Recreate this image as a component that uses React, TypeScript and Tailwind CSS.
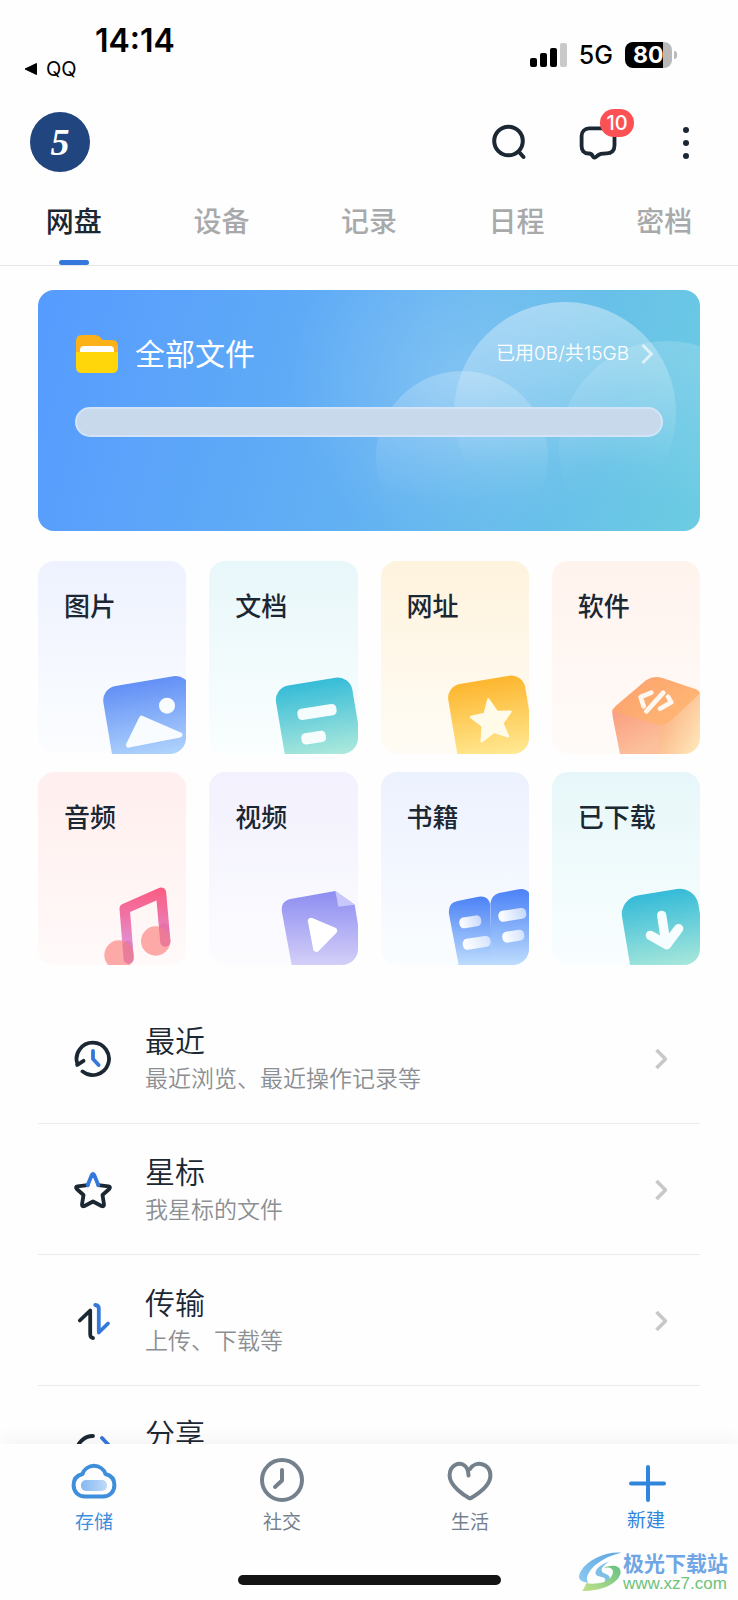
import { useState } from "react";
import type { ReactNode } from "react";

const TABS = ["网盘", "设备", "记录", "日程", "密档"];

const PILL = { height: 34, rx: 13, fill: "#fff" };

function Gradient({
  id,
  from,
  to,
}: {
  id: string;
  from: string;
  to: string;
}) {
  return (
    <linearGradient id={id} x1="0" y1="0" x2="0" y2="1">
      <stop offset="0" stopColor={from} />
      <stop offset="1" stopColor={to} />
    </linearGradient>
  );
}

/* Category artwork, all drawn in a 270 unit box */

const pictureArt = (
  <>
    <Gradient id="g-picture" from="#6390f6" to="#b9dcfd" />
    <rect width="264" height="256" rx="44" fill="url(#g-picture)" transform="translate(15 73) rotate(-9.5)" />
    <circle cx="213" cy="125" r="24" fill="#f8fcff" />
    <path d="M137 163L251 213L98 243Z" fill="#f8fcff" stroke="#f8fcff" strokeWidth="16" strokeLinejoin="round" />
  </>
);

const documentArt = (
  <>
    <Gradient id="g-document" from="#36bcd8" to="#b6ecdc" />
    <rect width="232" height="246" rx="44" fill="url(#g-document)" transform="translate(17 72) rotate(-9.5)" />
    <rect x="-59" y="-17" width="118" {...PILL} transform="translate(147 144) rotate(-9)" fillOpacity=".93" />
    <rect x="-37" y="-17" width="74" {...PILL} transform="translate(137 221) rotate(-9)" fillOpacity=".93" />
  </>
);

const linkArt = (
  <>
    <Gradient id="g-link" from="#fdb62f" to="#ffee9c" />
    <rect width="234" height="256" rx="42" fill="url(#g-link)" transform="translate(21 67) rotate(-9.5)" />
    <path
      d="M148 106L174 144L215 143L190 178L207 217L164 204L128 232L131 186L96 159L137 150Z"
      fill="#fffbe8"
      stroke="#fffbe8"
      strokeWidth="7"
      strokeLinejoin="round"
    />
  </>
);

const softwareArt = (
  <>
    <defs>
      <linearGradient id="g-box-top" x1="0" y1="0" x2="1" y2=".6">
        <stop offset="0" stopColor="#fba06e" />
        <stop offset="1" stopColor="#ffb774" />
      </linearGradient>
      <linearGradient id="g-box-left" x1="0" y1="0" x2=".5" y2="1">
        <stop offset="0" stopColor="#fa9d7e" />
        <stop offset="1" stopColor="#fcc09c" />
      </linearGradient>
      <linearGradient id="g-box-right" x1="0" y1=".2" x2="1" y2="1">
        <stop offset="0" stopColor="#fbab7c" />
        <stop offset="1" stopColor="#ffebbe" />
      </linearGradient>
    </defs>
    <path d="M8 135L150 180V270H30L8 158Q5 144 8 135Z" fill="url(#g-box-left)" />
    <path d="M149 180L262 80Q272 84 272 98V270H149Z" fill="url(#g-box-right)" />
    <path d="M8 141Q10 130 24 120L108 49Q132 32 160 43L258 76Q268 80 270 88L186 167Q160 190 128 178Z" fill="url(#g-box-top)" />
    <g fill="none" stroke="#fff8f0" strokeWidth="14" strokeLinecap="round" strokeLinejoin="round">
      <path d="M124 86L92 99L101 127" />
      <path d="M160 86L109 142" />
      <path d="M174 98L184 115L150 134" />
    </g>
  </>
);

const audioArt = (
  <>
    <linearGradient id="g-audio" gradientUnits="userSpaceOnUse" x1="0" y1="40" x2="0" y2="260">
      <stop offset="0" stopColor="#fb5c82" />
      <stop offset=".35" stopColor="#f072a4" />
      <stop offset="1" stopColor="#d9a0ee" />
    </linearGradient>
    <path d="M98 251L86 101L195 53L208 200" fill="none" stroke="url(#g-audio)" strokeWidth="31" strokeLinecap="round" strokeLinejoin="round" />
    <circle cx="69" cy="240" r="44" fill="#fb8a88" fillOpacity=".72" />
    <circle cx="179" cy="198" r="44" fill="#fb8a88" fillOpacity=".72" />
    <path d="M95 212L98 251M204 160L208 200" fill="none" stroke="#d8558f" strokeOpacity=".3" strokeWidth="30" strokeLinecap="round" />
  </>
);

const videoArt = (
  <>
    <Gradient id="g-video" from="#8d8df1" to="#d4cff8" />
    <path d="M71 270L42 112Q37 79 67 72L202 48L260 89L270 150V270Z" fill="url(#g-video)" />
    <path d="M202 48L211 95L260 89Z" fill="#c9c8fb" />
    <path d="M129 138L198 167L145 221Z" fill="#fff" stroke="#fff" strokeWidth="19" strokeLinejoin="round" />
  </>
);

const bookArt = (
  <>
    <Gradient id="g-book" from="#4c82f6" to="#bddcfd" />
    <linearGradient id="g-line" x1="0" x2="1">
      <stop offset="0" stopColor="#fff" />
      <stop offset="1" stopColor="#fff" stopOpacity=".6" />
    </linearGradient>
    <path d="M59 270L30 118Q26 84 56 78L118 65Q146 60 153 86L160 270Z" fill="url(#g-book)" />
    <path d="M154 86Q158 60 180 54L240 43Q264 39 274 60V270H158Z" fill="url(#g-book)" />
    <rect x="-33" y="-17" width="66" height="33" rx="14" fill="url(#g-line)" transform="translate(94 141) rotate(-9)" />
    <rect x="-42" y="-17" width="84" height="33" rx="14" fill="url(#g-line)" transform="translate(113 204) rotate(-9)" />
    <rect x="-42" y="-17" width="84" height="33" rx="14" fill="url(#g-line)" transform="translate(220 120) rotate(-9)" />
    <rect x="-33" y="-17" width="66" height="33" rx="14" fill="url(#g-line)" transform="translate(223 184) rotate(-9)" />
  </>
);

const downloadArt = (
  <>
    <Gradient id="g-download" from="#35bbd8" to="#b4ecdb" />
    <rect width="232" height="256" rx="56" fill="url(#g-download)" transform="translate(27 71) rotate(-9.5)" />
    <path d="M155 121L168 206M121 181L170 209L206 161" fill="none" stroke="#f5fdff" strokeWidth="28" strokeLinecap="round" strokeLinejoin="round" />
  </>
);

const CATEGORIES = [
  { label: "图片", bg: "from-[#eef2fe] to-[#fbfdff]", art: pictureArt },
  { label: "文档", bg: "from-[#e8f7fa] to-[#fafefe]", art: documentArt },
  { label: "网址", bg: "from-[#fef3dd] to-[#fffcf5]", art: linkArt },
  { label: "软件", bg: "from-[#fff3ed] to-[#fffbf9]", art: softwareArt },
  { label: "音频", bg: "from-[#ffefee] to-[#fff9f9]", art: audioArt },
  { label: "视频", bg: "from-[#f2f1fd] to-[#fcfcff]", art: videoArt },
  { label: "书籍", bg: "from-[#ecf1fe] to-[#fafdff]", art: bookArt },
  { label: "已下载", bg: "from-[#e7f7f9] to-[#f9feff]", art: downloadArt },
];

function RowIcon({ children }: { children: ReactNode }) {
  return (
    <svg
      viewBox="0 0 40 40"
      className="size-10 shrink-0"
      fill="none"
      stroke="#1b2733"
      strokeWidth="3.8"
      strokeLinecap="round"
      strokeLinejoin="round"
    >
      {children}
    </svg>
  );
}

const ROWS = [
  {
    title: "最近",
    note: "最近浏览、最近操作记录等",
    icon: (
      <RowIcon>
        <path d="M9.500 32.400A16.200 16.200 0 1 0 4.400 25" />
        <path d="M4.200 26L10.500 21.800" />
        <path d="M20 12v8l5.600 6" stroke="#3478dc" />
      </RowIcon>
    ),
  },
  {
    title: "星标",
    note: "我星标的文件",
    icon: (
      <RowIcon>
        <path d="M14.600 15.200L4.500 16.400Q2 17 3.800 19L10.500 25L9 34.500Q9 37 11.500 36L20 31.500L28.500 36Q31 37 31 34.500L29.500 25L36.200 19Q38 17 35.500 16.400L25.400 15.200" />
        <path d="M14.600 15.200L18.800 5Q20 3 21.200 5L25.400 15.200" stroke="#3478dc" />
      </RowIcon>
    ),
  },
  {
    title: "传输",
    note: "上传、下载等",
    icon: (
      <RowIcon>
        <path d="M6.800 19.500L17.200 9.500V33.500q.2 3.200 2.800 3.500" />
        <path d="M22.200 4q3.600.4 3.600 3.500V31.500L35 22.500" stroke="#3478dc" />
      </RowIcon>
    ),
  },
  {
    title: "分享",
    note: "",
    icon: (
      <RowIcon>
        <path d="M20 4A16.500 16.500 0 0 0 20 37" />
        <path d="M29 6l8 8.500-8 8M35 14.500H28" stroke="#3478dc" />
      </RowIcon>
    ),
  },
];

const NAV = [
  {
    label: "存储",
    icon: (
      <>
        <defs>
          <linearGradient id="g-cloud" x1="0" x2="1">
            <stop offset="0" stopColor="#86b8f0" />
            <stop offset="1" stopColor="#bedaf8" />
          </linearGradient>
        </defs>
        <path d="M12.500 16A12.200 12.200 0 0 1 35.500 16C41.500 17.500 44.400 22 44.400 27C44.400 34 39.500 38.500 33 38.500H15C8.500 38.500 3.600 34 3.600 27C3.600 22 6.500 17.500 12.500 16Z" />
        <rect x="11" y="22" width="26" height="11" rx="5" fill="url(#g-cloud)" stroke="none" />
      </>
    ),
  },
  {
    label: "社交",
    icon: (
      <>
        <circle cx="24" cy="22" r="20" />
        <path d="M24 12v10.500L17 29" />
      </>
    ),
  },
  {
    label: "生活",
    icon: (
      <path d="M22.500 17.500C22.300 14 22.500 10.500 18.500 7.500C13.500 3.800 3.600 6.400 3.600 17.500C3.600 28 18.500 37.500 23 40Q24 40.600 25 40C31 36.500 44.400 27.500 44.400 17.500C44.400 4.500 29 2.500 24 11" />
    ),
  },
];

function StatusBar() {
  return (
    <div className="flex h-24 justify-between text-black">
      <div className="pt-[23px]">
        <p className="pl-[95px] text-[32px] leading-9 font-semibold">14:14</p>
        <a href="#qq" className="flex items-center gap-2 pl-6 text-xl leading-5">
          <svg viewBox="0 0 14 14" className="size-3.5">
            <path d="M1 7L12.500 1.500V12.500Z" stroke="#000" strokeLinejoin="round" />
          </svg>
          QQ
        </a>
      </div>
      <div className="flex h-[110px] items-center pr-[61px]">
        <svg viewBox="0 0 37 24" className="h-6 w-[37px]">
          <rect y="15" width="7" height="9" rx="2" />
          <rect x="10" y="10" width="7" height="14" rx="2" />
          <rect x="20" y="5" width="7" height="19" rx="2" />
          <rect x="30" width="7" height="24" rx="2" fill="#c9c9c9" />
        </svg>
        <span className="ml-3 text-[25px] leading-7 font-medium">5G</span>
        <span className="ml-3 flex items-center gap-0.5">
          <span className="flex h-[26px] w-[47px] items-center rounded-lg bg-linear-to-r from-black from-80% to-[#b9b9b9] to-80% pl-2 text-[23px] font-bold text-white">
            80
          </span>
          <span className="h-2 w-[3px] rounded-r-full bg-[#b9b9b9]" />
        </span>
      </div>
    </div>
  );
}

function Header() {
  return (
    <header className="flex items-center justify-between px-8 pt-4 pb-4">
      <button className="-ml-0.5 flex size-[60px] items-center justify-center rounded-full bg-[#20457f] font-['Liberation_Serif',serif] text-[38px] leading-none font-bold text-white italic">
        5
      </button>
      <div className="flex items-center gap-12 text-[#1b2733]">
        <button aria-label="搜索">
          <svg viewBox="0 0 40 40" className="size-10" fill="none" stroke="currentColor" strokeWidth="4" strokeLinecap="round">
            <circle cx="18.500" cy="19" r="14.300" />
            <path d="M29.500 30.500L33.500 35" />
          </svg>
        </button>
        <button aria-label="消息" className="relative">
          <svg viewBox="0 0 40 40" className="size-10" fill="none" stroke="currentColor" strokeWidth="3.800" strokeLinejoin="round">
            <path d="M11 6.300H29a7.500 7.500 0 0 1 7.500 7.500V23.500c0 5-3 7.800-7.800 7.800-5 0-7 .2-11 3.800q-1.700 1.200-2.800-.6-1.200-3-4-3H10.500C6 31.500 3.600 28.500 3.600 24V13.800A7.500 7.500 0 0 1 11 6.300Z" />
          </svg>
          <span className="absolute -top-[13px] left-[22px] flex h-7 w-[34px] items-center justify-center rounded-full bg-[#fb5054] text-xl font-medium text-white">
            10
          </span>
        </button>
        <button aria-label="更多">
          <svg viewBox="0 0 40 40" className="size-10" fill="currentColor">
            <circle cx="20" cy="8" r="3" />
            <circle cx="20" cy="21" r="3" />
            <circle cx="20" cy="34" r="3" />
          </svg>
        </button>
      </div>
    </header>
  );
}

function StorageCard() {
  return (
    <section className="relative h-[241px] overflow-hidden rounded-2xl bg-linear-[105deg] from-[#569bff] via-[#62b0f3] via-50% to-[#6ccce2]">
      {/* Bubbles */}
      <svg viewBox="0 0 662 241" preserveAspectRatio="xMaxYMin slice" className="absolute inset-0 size-full">
        <defs>
          <linearGradient id="g-bubble" x1="0" y1="0" x2="0" y2="1">
            <stop offset="0" stopColor="#fff" stopOpacity=".4" />
            <stop offset=".75" stopColor="#fff" stopOpacity="0" />
          </linearGradient>
          <radialGradient id="g-glow">
            <stop offset="0" stopColor="#fff" stopOpacity=".18" />
            <stop offset="1" stopColor="#fff" stopOpacity="0" />
          </radialGradient>
        </defs>
        <circle cx="420" cy="90" r="170" fill="url(#g-glow)" />
        <circle cx="527" cy="123" r="111" fill="url(#g-bubble)" />
        <circle cx="424" cy="167" r="86" fill="url(#g-bubble)" fillOpacity=".6" />
        <circle cx="629" cy="159" r="108" fill="url(#g-bubble)" fillOpacity=".4" />
      </svg>

      <div className="relative px-[37px] pt-10">
        <a href="#files" className="flex h-12 items-center text-white">
          <svg viewBox="0 0 44 40" className="h-10 w-11">
            <path d="M1 7Q1 1 7 1H20Q23 1 25 3L27 5.500Q28 6 30 6H37Q43 6 43 12V24H1Z" fill="#fbb117" />
            <path d="M5 20V16Q5 12 9 12H35Q39 12 39 16V20Z" fill="#fff" />
            <path d="M1 18H43V33Q43 39 37 39H7Q1 39 1 33Z" fill="#fed60a" />
          </svg>
          <span className="ml-4 text-[30px] leading-10">全部文件</span>
          <span className="ml-auto text-[19px] font-[350]">已用0B/共15GB</span>
          <svg viewBox="0 0 12 20" className="mr-2.5 ml-3 h-5 w-3" fill="none" stroke="#fff" strokeOpacity=".65" strokeWidth="3">
            <path d="M1.500 1L10.500 10L1.500 19" />
          </svg>
        </a>
        <div
          role="progressbar"
          aria-label="已用空间"
          aria-valuenow={0}
          className="mt-[29px] h-[30px] rounded-full border-2 border-[#d3e4f8] bg-[#c8d9ec]"
        />
      </div>
    </section>
  );
}

export default function App() {
  const [tab, setTab] = useState("网盘");
  const [page, setPage] = useState("存储");

  return (
    <div className="relative flex h-screen flex-col bg-[#fefefe] font-['Inter','Noto_Sans_CJK_SC',sans-serif] text-[#1b2733]">
      <StatusBar />
      <Header />

      {/* Tabs */}
      <div role="tablist" className="grid h-[78px] shrink-0 grid-cols-5 border-b border-[#e6e6e8]">
        {TABS.map((name) => (
          <button
            key={name}
            role="tab"
            aria-selected={tab === name}
            onClick={() => setTab(name)}
            className={`flex flex-col items-center justify-between pt-3.5 text-[28px] leading-10 font-medium ${
              tab === name ? "text-[#1b2733]" : "text-[#a8a9ab]"
            }`}
          >
            {name}
            {tab === name && (
              <span className="h-[5px] w-[30px] rounded-full bg-[#3478dc]" />
            )}
          </button>
        ))}
      </div>

      <main className="min-h-0 flex-1 overflow-y-auto px-[38px] pt-6 [scrollbar-width:none]">
        <StorageCard />

        {/* Categories */}
        <div className="mt-[30px] grid grid-cols-4 gap-x-[23px] gap-y-[18px]">
          {CATEGORIES.map((item) => (
            <button
              key={item.label}
              className={`relative h-[193px] overflow-hidden rounded-2xl bg-linear-to-b ${item.bg}`}
            >
              <span className="flex h-full px-[26px] pt-[26px] text-[26px] leading-10 font-medium">
                {item.label}
              </span>
              <svg viewBox="0 0 270 270" className="absolute right-0 bottom-0 size-[90px]">
                {item.art}
              </svg>
            </button>
          ))}
        </div>

        {/* Entries */}
        <ul className="mt-7">
          {ROWS.map((row) => (
            <li key={row.title} className="border-b border-[#ececee]">
              <a href="#entry" className="flex h-[130px] items-start pt-7">
                <span className="mt-[18px] ml-[35px]">{row.icon}</span>
                <span className="ml-8 flex flex-col">
                  <span className="text-[30px] leading-10 font-[350]">{row.title}</span>
                  {row.note && (
                    <span className="text-[23px] leading-9 font-[350] text-[#8b8e92]">
                      {row.note}
                    </span>
                  )}
                </span>
                {row.note && (
                  <svg viewBox="0 0 12 20" className="mt-7 mr-[33px] ml-auto h-5 w-3" fill="none" stroke="#c6c8ca" strokeWidth="3.600">
                    <path d="M1.500 1L10.500 10L1.500 19" />
                  </svg>
                )}
              </a>
            </li>
          ))}
        </ul>
      </main>

      {/* Bottom bar */}
      <nav className="relative h-[156px] shrink-0 bg-[#fefefe] shadow-[0_-6px_16px_rgba(0,0,0,0.04)]">
        <div className="flex pt-3.5 pr-2.5">
          {NAV.map((item) => (
            <button
              key={item.label}
              onClick={() => setPage(item.label)}
              className={`flex flex-1 flex-col items-center gap-[7px] text-[19px] leading-7 ${
                page === item.label ? "text-[#3f8edb]" : "text-[#74818d]"
              }`}
            >
              <svg viewBox="0 0 48 44" className="h-11 w-12" fill="none" stroke="currentColor" strokeWidth="4" strokeLinecap="round" strokeLinejoin="round">
                {item.icon}
              </svg>
              {item.label}
            </button>
          ))}
          <button className="flex w-[164px] flex-col items-center gap-[5px] text-[19px] leading-7 text-[#2f86dc]">
            <svg viewBox="0 0 48 44" className="h-11 w-12" fill="none" stroke="currentColor" strokeWidth="4" strokeLinecap="round">
              <path d="M26 9V42M9 25.500H42" />
            </svg>
            新建
          </button>
        </div>
        <div className="mx-auto mt-[38px] h-2.5 w-[263px] rounded-full bg-[#141414]" />
      </nav>

      {/* Site mark */}
      <div className="absolute right-2.5 bottom-2 flex items-center">
        <svg viewBox="0 0 126 120" className="h-10 w-[42px]">
          <defs>
            <linearGradient id="g-swirl-a" x1="1" y1="0" x2="0" y2="1">
              <stop offset="0" stopColor="#5aa5e2" />
              <stop offset="1" stopColor="#8dcaf0" />
            </linearGradient>
            <linearGradient id="g-swirl-b" x1="1" y1="0" x2="0" y2="1">
              <stop offset="0" stopColor="#64c284" />
              <stop offset="1" stopColor="#c3e08a" />
            </linearGradient>
          </defs>
          <path d="M126 2C78 0 26 22 4 60C-6 80 4 90 28 92C18 82 26 58 50 38C72 20 98 8 126 2Z" fill="url(#g-swirl-a)" />
          <path d="M92 28C66 36 46 54 50 66C54 76 72 72 78 80C82 88 72 98 56 104C78 98 94 90 92 76C90 64 70 66 68 56C66 48 78 36 92 28Z" fill="#7fbfe6" />
          <path d="M74 48C98 42 108 54 98 72C86 92 54 98 22 94Q18 104 10 117C62 118 114 98 124 66C130 40 98 36 74 48Z" fill="url(#g-swirl-b)" />
        </svg>
        <div className="ml-0.5">
          <p className="text-[21px] leading-6 font-bold text-[#6fa6e3]">极光下载站</p>
          <p className="font-['Liberation_Sans',sans-serif] text-[17px] leading-4 text-[#6cc27a]">
            www.xz7.com
          </p>
        </div>
      </div>
    </div>
  );
}
